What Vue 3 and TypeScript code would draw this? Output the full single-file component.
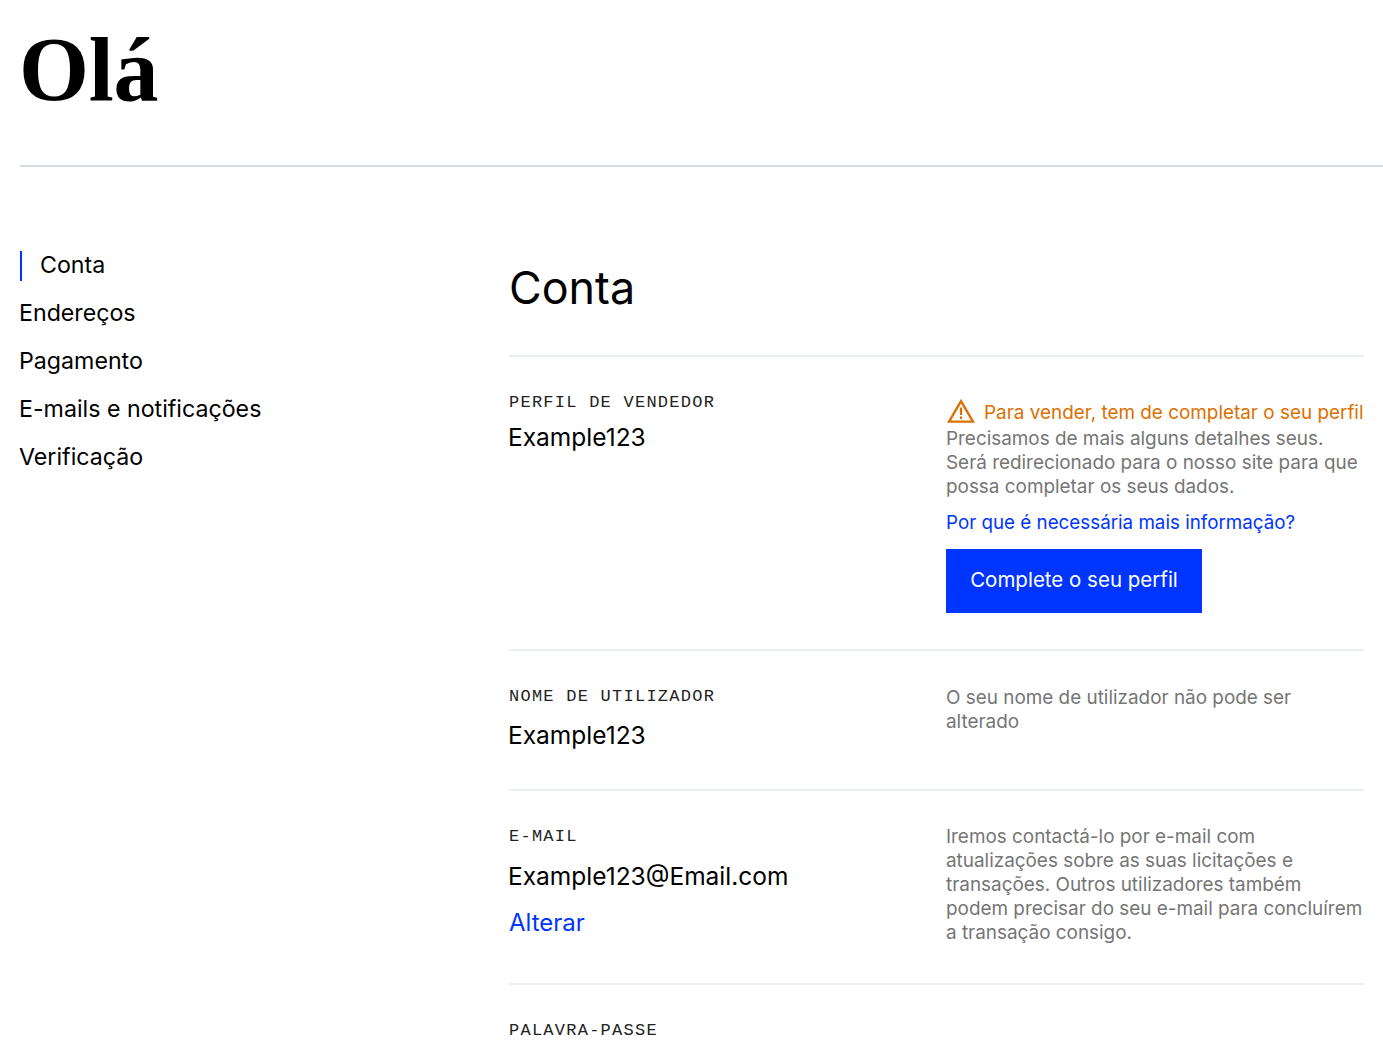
<script setup lang="ts">
const navItems: string[] = ['Endereços', 'Pagamento', 'E-mails e notificações', 'Verificação']
</script>

<template>
  <div class="page">
    <header class="head"><h1 class="hello">Olá</h1></header>
    <div class="layout">
      <nav class="nav">
        <a class="nav-item active">Conta</a>
        <a v-for="n in navItems" :key="n" class="nav-item">{{ n }}</a>
      </nav>
      <main class="main">
        <h2 class="title">Conta</h2>
        <section class="row first">
          <div class="left">
            <div class="label">PERFIL DE VENDEDOR</div>
            <div class="value v1">Example123</div>
          </div>
          <div class="right">
            <div class="warn">
              <svg class="warn-icon" width="28" height="24" viewBox="0 0 28 24" fill="none">
                <path d="M14 2.2 L26 22.6 H2 Z" stroke="#dd6f00" stroke-width="2.4" stroke-linejoin="miter" />
                <path d="M14 8.5 V16" stroke="#dd6f00" stroke-width="2.2" />
                <path d="M14 17.4 V20" stroke="#dd6f00" stroke-width="2.2" />
              </svg>
              <span>Para vender, tem de completar o seu perfil</span>
            </div>
            <p class="desc d1">Precisamos de mais alguns detalhes seus.<br />Será redirecionado para o nosso site para que possa completar os seus dados.</p>
            <a class="why">Por que é necessária mais informação?</a>
            <button class="cta">Complete o seu perfil</button>
          </div>
        </section>
        <section class="row second">
          <div class="left">
            <div class="label">NOME DE UTILIZADOR</div>
            <div class="value v2">Example123</div>
          </div>
          <div class="right">
            <p class="desc">O seu nome de utilizador não pode ser alterado</p>
          </div>
        </section>
        <section class="row third">
          <div class="left">
            <div class="label">E-MAIL</div>
            <div class="value v3">Example123@Email.com</div>
            <a class="change">Alterar</a>
          </div>
          <div class="right">
            <p class="desc">Iremos contactá-lo por e-mail com atualizações sobre as suas licitações e transações. Outros utilizadores também podem precisar do seu e-mail para concluírem a transação consigo.</p>
          </div>
        </section>
        <section class="row last">
          <div class="left">
            <div class="label">PALAVRA-PASSE</div>
          </div>
        </section>
      </main>
    </div>
  </div>
</template>

<style>
html, body { margin: 0; background: #fff; overflow: hidden; }
</style>

<style scoped>
.page {
  height: 1045px;
  overflow: hidden;
  font-family: Inter, "Noto Sans", sans-serif;
  color: #000;
  box-sizing: border-box;
  padding-left: 20px;
}
.head {
  height: 165px;
  border-bottom: 2px solid #d3dce4;
}
.hello {
  margin: 0 0 0 -1px;
  padding-top: 24px;
  font-family: "Liberation Serif", serif;
  font-weight: 700;
  font-size: 90px;
  line-height: 92px;
  letter-spacing: -0.3px;
}
.layout {
  display: grid;
  grid-template-columns: 489px 855px;
}
.nav {
  display: flex;
  flex-direction: column;
  padding-top: 74px;
  margin-left: -1px;
}
.nav-item {
  font-size: 23.2px;
  line-height: 48px;
  height: 48px;
}
.nav-item.active {
  position: relative;
  padding-left: 21px;
}
.nav-item.active::before {
  content: "";
  position: absolute;
  left: 1px;
  top: 10px;
  width: 2px;
  height: 30px;
  background: #0034ff;
}
.title {
  margin: 0;
  padding-top: 91px;
  padding-bottom: 1px;
  font-size: 44.8px;
  line-height: 60px;
  font-weight: 400;
  height: 96px;
  box-sizing: content-box;
}
.row {
  display: grid;
  grid-template-columns: 437px 418px;
  border-top: 2px solid #eceff2;
  box-sizing: border-box;
}
.first { height: 294px; padding-top: 34px; }
.second { height: 140px; padding-top: 34px; }
.third { height: 194px; padding-top: 34px; }
.last { padding-top: 34px; }
.label {
  font-family: "Liberation Mono", monospace;
  font-size: 17px;
  line-height: 20px;
  letter-spacing: 1.25px;
  color: #222;
  padding-top: 2px;
}
.value {
  font-size: 24.5px;
  line-height: 32px;
  margin-left: -1px;
}
.v1 { margin-top: 8px; }
.v2 { margin-top: 12px; }
.v3 { margin-top: 13px; }
.change {
  display: block;
  margin-top: 15px;
  font-size: 24px;
  line-height: 32px;
  color: #0034ff;
}
.warn {
  display: flex;
  align-items: center;
  gap: 9px;
  color: #dd6f00;
  font-size: 18.9px;
  line-height: 24px;
  height: 24px;
  margin-top: 10px;
  white-space: nowrap;
}
.warn-icon { flex: none; margin-top: -5px; margin-left: 1px; }
.desc {
  margin: 0;
  font-size: 18.9px;
  line-height: 24px;
  color: #757575;
}
.d1 { margin-top: 2px; }
.second .desc { margin-top: 1px; }
.why {
  display: block;
  margin-top: 12px;
  font-size: 18.8px;
  line-height: 24px;
  color: #0034ff;
}
.cta {
  display: block;
  margin-top: 14px;
  width: 256px;
  height: 64px;
  border: 0;
  padding: 0 0 3px;
  background: #0034ff;
  color: #fff;
  font-family: inherit;
  font-size: 20.5px;
}
</style>
